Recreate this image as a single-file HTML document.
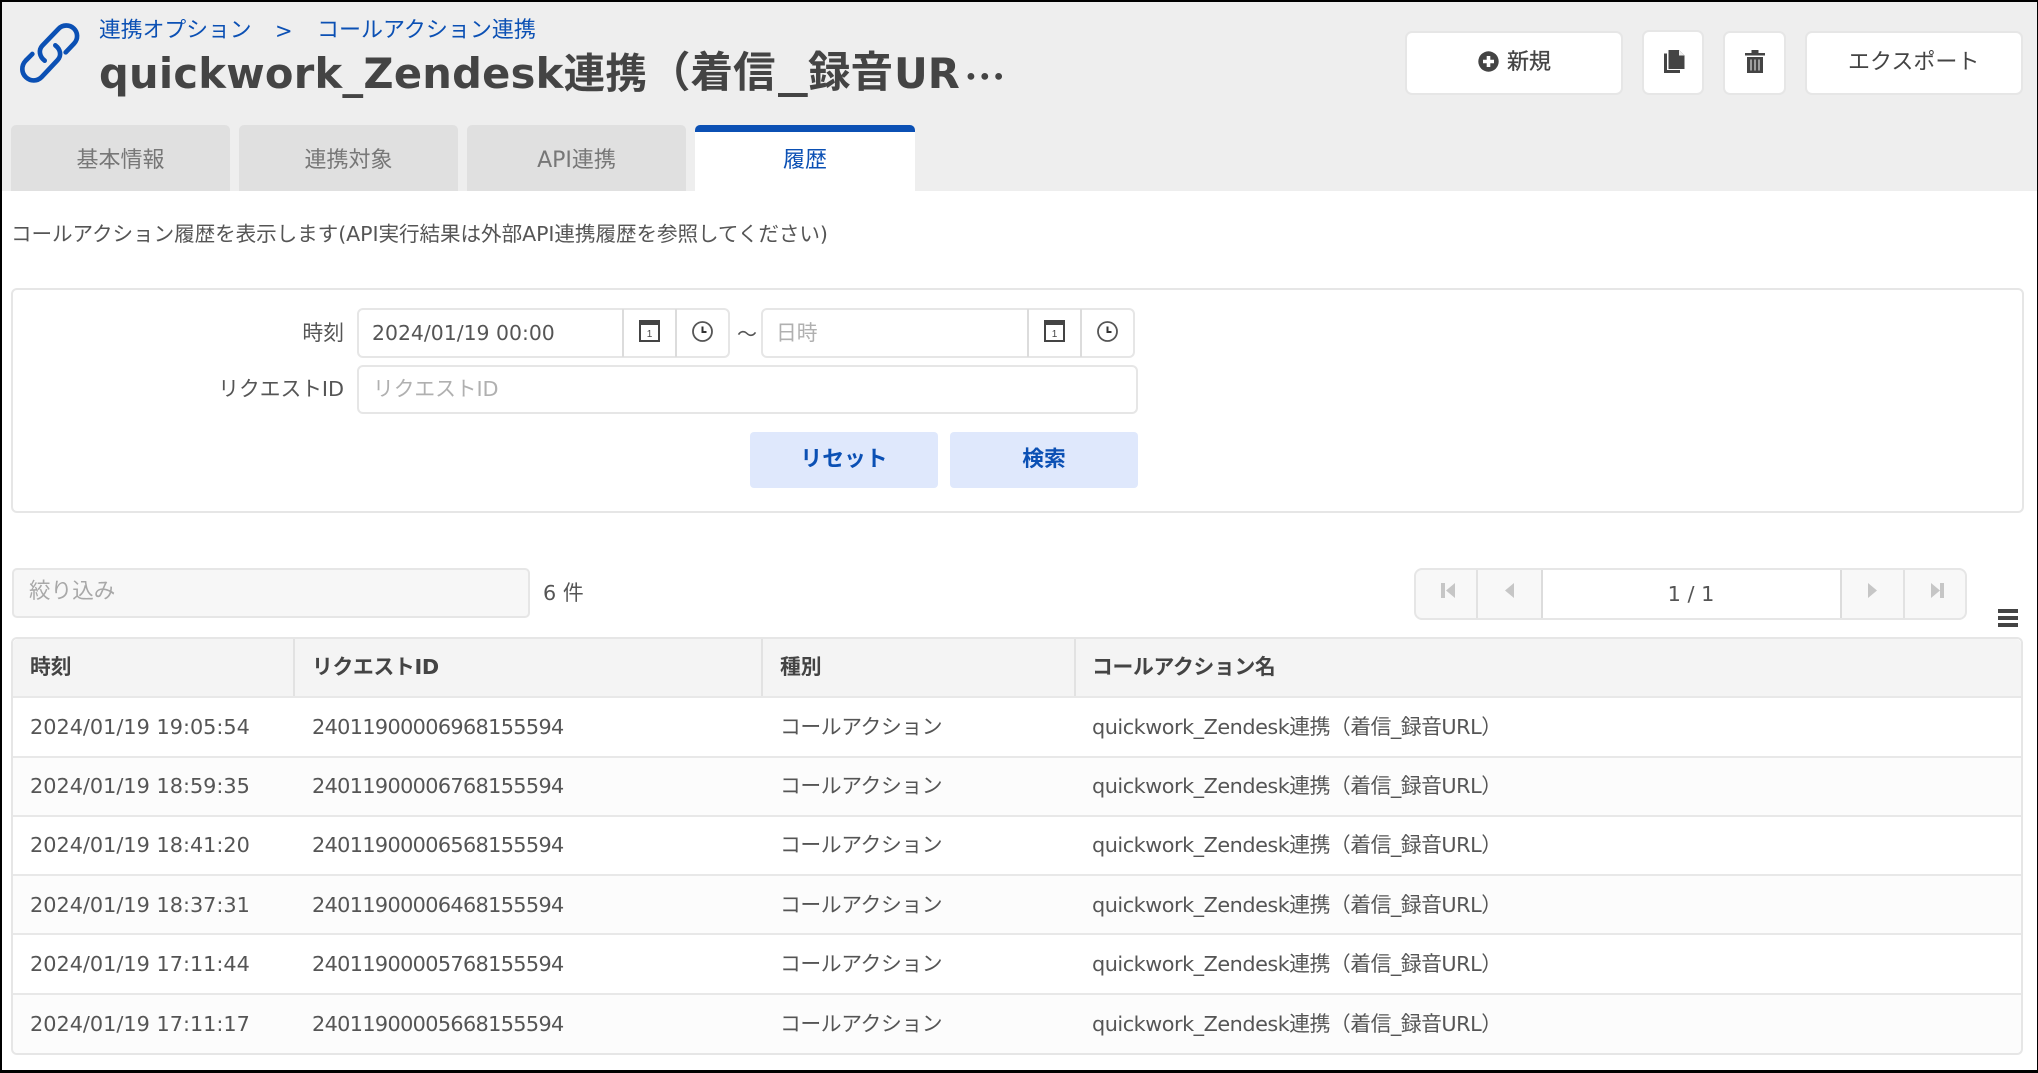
<!DOCTYPE html>
<html lang="ja"><head><meta charset="utf-8"><title>履歴</title>
<style>
*{box-sizing:border-box}
html,body{margin:0;padding:0;background:#fff}
body{width:2038px;height:1073px;position:relative;overflow:hidden;font-family:"DejaVu Sans","Noto Sans CJK JP",sans-serif;color:#555;font-size:20.8px}
#w{position:absolute;left:0;top:0;width:2038px;height:1073px;filter:blur(.35px)}
.a{position:absolute}
.t{position:absolute;height:30px;line-height:30px;white-space:nowrap}
.h{position:absolute;top:49px;height:50px;line-height:50px;white-space:nowrap;font-size:42.5px;font-weight:bold;color:#444}
.box{position:absolute;background:#fff;border:2px solid #e6e6e6;border-radius:6px}
.tab{position:absolute;top:125px;width:219px;height:66px;background:#e0e0e0;border-radius:5px 5px 0 0;text-align:center;line-height:72px;font-size:22px;color:#777}
.btn{position:absolute;top:31px;height:64px;background:#fff;border:2px solid #e6e6e6;border-radius:7px}
.blue{position:absolute;top:432px;width:188px;height:56px;background:#dfe8fc;border-radius:4px;text-align:center;line-height:55px;color:#0b50b4;font-weight:bold;font-size:21.8px}
.v{position:absolute;width:2px;background:#dcdcdc}
.r{position:absolute;left:13px;width:2008px;height:60px;border-top:2px solid #e8e8e8}
.ph{color:#b0b0b0}
.c1{left:30px;letter-spacing:0}
.c2{left:312px;letter-spacing:-.65px}
.c3{left:780px;letter-spacing:-.4px}
.c4{left:1092px;letter-spacing:-.48px}
</style></head><body><div id="w">
<!-- header -->
<div class="a" style="left:0;top:0;width:2038px;height:191px;background:#eeeeee"></div>
<svg class="a" style="left:0;top:0" width="120" height="100" viewBox="0 0 360 300"><g fill="none" stroke="#0b50b4" stroke-width="14" stroke-linecap="round"><path d="M197 157 L222 131 C235 117 234 97 221 85 C208 73 188 74 176 86 L127 137 C115 150 118 170 134 182"/><path d="M97 162 L77 182 C63 197 64 219 78 232 C92 245 112 244 124 232 L173 180 C185 167 182 148 166 136"/></g></svg>
<div class="t" style="left:99px;top:16px;color:#0b50b4;font-size:21.8px">連携オプション</div>
<div class="t" style="left:275px;top:16px;color:#0b50b4;font-size:21px">&gt;</div>
<div class="t" style="left:317px;top:16px;color:#0b50b4;font-size:22px">コールアクション連携</div>
<div class="h" style="left:99px;font-size:41.6px;letter-spacing:.25px">quickwork_Zendesk連携</div>
<div class="h" style="left:648px">（着信</div>
<div class="h" style="left:778px;transform:scaleX(1.4);transform-origin:left center">_</div>
<div class="h" style="left:810px;margin-left:-2px">録音</div>
<div class="h" style="left:894px;font-size:41.6px">UR</div>
<div class="h" style="left:964px;font-size:41.6px;font-family:'Noto Sans CJK JP',sans-serif">…</div>

<div class="btn" style="left:1405px;width:218px"></div>
<svg class="a" style="left:1478px;top:51px" width="21" height="21" viewBox="0 0 21 21"><circle cx="10.5" cy="10.5" r="10.2" fill="#444"/><path d="M10.5 5v11M5 10.500h11" stroke="#fff" stroke-width="3.600"/></svg>
<div class="t" style="left:1507px;top:48px;font-size:22px;color:#444;-webkit-text-stroke:.3px #444">新規</div>
<div class="btn" style="left:1642px;width:62px;top:30px;height:65px"></div>
<svg class="a" style="left:1664px;top:50px" width="21" height="23" viewBox="0 0 21 23"><path d="M4.500 0h10.500l5.500 5.500v13.500H4.500z" fill="#444"/><path d="M15 0v5.500h5.500z" fill="#eee"/><path d="M0 3.500h3v16.500h13v3H0z" fill="#444"/></svg>
<div class="btn" style="left:1723px;width:63px"></div>
<svg class="a" style="left:1745px;top:50px" width="20" height="23" viewBox="0 0 20 23"><path d="M0 3h20v2.500H0zM6.500 0h7v3h-7z" fill="#444"/><path d="M2 7h16v16H2z" fill="#444"/><path d="M6 9.500v11M10 9.500v11M14 9.500v11" stroke="#bbb" stroke-width="1.500"/></svg>
<div class="btn" style="left:1805px;width:218px"></div>
<div class="t" style="left:1848px;top:48px;font-size:22px;color:#444">エクスポート</div>

<div class="tab" style="left:11px">基本情報</div>
<div class="tab" style="left:239px">連携対象</div>
<div class="tab" style="left:467px">API連携</div>
<div class="tab" style="left:695px;width:220px;background:#fff;color:#0b50b4;border-top:7px solid #0b50b4;line-height:58px">履歴</div>

<div class="t" style="left:11px;top:219px;font-size:20.6px;letter-spacing:-.08px">コールアクション履歴を表示します(API実行結果は外部API連携履歴を参照してください)</div>

<!-- search panel -->
<div class="box" style="left:11px;top:288px;width:2013px;height:225px"></div>
<div class="t" style="right:1694px;top:318px">時刻</div>
<div class="box" style="left:357px;top:308px;width:373px;height:50px"></div>
<div class="v" style="left:622px;top:309px;height:48px"></div>
<div class="v" style="left:675px;top:309px;height:48px"></div>
<div class="t" style="left:372px;top:318px;font-size:20.4px">2024/01/19 00:00</div>
<svg class="a" style="left:639px;top:320px" width="21" height="22" viewBox="0 0 21 22"><rect x="1" y="1" width="19" height="20" fill="none" stroke="#444" stroke-width="2"/><rect x="0" y="0" width="21" height="5" fill="#444"/><text x="10.500" y="17" font-size="10" text-anchor="middle" fill="#444" font-family="Liberation Sans, sans-serif">1</text></svg>
<svg class="a" style="left:692px;top:321px" width="21" height="21" viewBox="0 0 21 21"><circle cx="10.500" cy="10.500" r="9.500" fill="none" stroke="#555" stroke-width="1.800"/><path d="M10.500 5.500v5.500h4" fill="none" stroke="#333" stroke-width="2"/></svg>
<div class="t" style="left:737px;top:318px;font-size:20px;font-family:'Noto Sans CJK JP',sans-serif">〜</div>
<div class="box" style="left:761px;top:308px;width:374px;height:50px"></div>
<div class="v" style="left:1027px;top:309px;height:48px"></div>
<div class="v" style="left:1080px;top:309px;height:48px"></div>
<div class="t ph" style="left:776px;top:318px">日時</div>
<svg class="a" style="left:1044px;top:320px" width="21" height="22" viewBox="0 0 21 22"><rect x="1" y="1" width="19" height="20" fill="none" stroke="#444" stroke-width="2"/><rect x="0" y="0" width="21" height="5" fill="#444"/><text x="10.500" y="17" font-size="10" text-anchor="middle" fill="#444" font-family="Liberation Sans, sans-serif">1</text></svg>
<svg class="a" style="left:1097px;top:321px" width="21" height="21" viewBox="0 0 21 21"><circle cx="10.500" cy="10.500" r="9.500" fill="none" stroke="#555" stroke-width="1.800"/><path d="M10.500 5.500v5.500h4" fill="none" stroke="#333" stroke-width="2"/></svg>
<div class="t" style="right:1694px;top:374px;letter-spacing:-.05px">リクエストID</div>
<div class="box" style="left:357px;top:365px;width:781px;height:49px"></div>
<div class="t ph" style="left:373px;top:374px;letter-spacing:-.1px">リクエストID</div>
<div class="blue" style="left:750px">リセット</div>
<div class="blue" style="left:950px">検索</div>

<!-- list tools -->
<div class="box" style="left:12px;top:568px;width:518px;height:50px;background:#f7f7f7;border-radius:5px"></div>
<div class="t ph" style="left:29px;top:577px;color:#a8a8a8;font-size:21.6px">絞り込み</div>
<div class="t" style="left:543px;top:578px">6 件</div>
<div class="box" style="left:1414px;top:568px;width:553px;height:52px;background:#f8f8f8;border-radius:8px"></div>
<div class="a" style="left:1542px;top:570px;width:298px;height:48px;background:#fff"></div>
<div class="v" style="left:1476px;top:570px;height:48px;background:#e2e2e2"></div>
<div class="v" style="left:1541px;top:570px;height:48px"></div>
<div class="v" style="left:1840px;top:570px;height:48px"></div>
<div class="v" style="left:1903px;top:570px;height:48px;background:#e2e2e2"></div>
<svg class="a" style="left:1440px;top:582px" width="506" height="18" viewBox="0 0 506 18" fill="#c6c6c6"><path d="M1 1h4v15H1zM15 1v15L6 8.500zM74 1v15L65 8.500zM428 1v15l9-7.500zM491 1v15l9-7.500zM500 1h4v15h-4z"/></svg>
<div class="t" style="left:1639px;width:104px;text-align:center;top:579px">1 / 1</div>
<div class="a" style="left:1998px;top:609px;width:20px;height:3.500px;background:#444"></div>
<div class="a" style="left:1998px;top:616px;width:20px;height:3.500px;background:#444"></div>
<div class="a" style="left:1998px;top:623px;width:20px;height:3.500px;background:#444"></div>

<!-- table -->
<div class="box" style="left:11px;top:637px;width:2012px;height:418px;overflow:hidden"></div>
<div class="a" style="left:13px;top:639px;width:2008px;height:58px;background:#f4f4f4;border-radius:5px 5px 0 0"></div>
<div class="v" style="left:293px;top:639px;height:58px;background:#e2e2e2"></div>
<div class="v" style="left:761px;top:639px;height:58px;background:#e2e2e2"></div>
<div class="v" style="left:1074px;top:639px;height:58px;background:#e2e2e2"></div>
<div class="t" style="left:30px;top:652px;font-weight:bold;letter-spacing:-.1px;color:#444">時刻</div>
<div class="t" style="left:312px;top:652px;font-weight:bold;letter-spacing:-.3px;color:#444">リクエストID</div>
<div class="t" style="left:780px;top:652px;font-weight:bold;letter-spacing:-.1px;color:#444">種別</div>
<div class="t" style="left:1092px;top:652px;font-weight:bold;letter-spacing:-.3px;color:#444">コールアクション名</div>

<div class="r" style="top:696px"></div>
<div class="t c1" style="top:712px">2024/01/19 19:05:54</div><div class="t c2" style="top:712px">24011900006968155594</div><div class="t c3" style="top:712px">コールアクション</div><div class="t c4" style="top:712px">quickwork_Zendesk連携（着信_録音URL）</div>
<div class="r" style="top:756px;background:#fcfcfc"></div>
<div class="t c1" style="top:771px">2024/01/19 18:59:35</div><div class="t c2" style="top:771px">24011900006768155594</div><div class="t c3" style="top:771px">コールアクション</div><div class="t c4" style="top:771px">quickwork_Zendesk連携（着信_録音URL）</div>
<div class="r" style="top:815px"></div>
<div class="t c1" style="top:830px">2024/01/19 18:41:20</div><div class="t c2" style="top:830px">24011900006568155594</div><div class="t c3" style="top:830px">コールアクション</div><div class="t c4" style="top:830px">quickwork_Zendesk連携（着信_録音URL）</div>
<div class="r" style="top:874px;background:#fcfcfc"></div>
<div class="t c1" style="top:890px">2024/01/19 18:37:31</div><div class="t c2" style="top:890px">24011900006468155594</div><div class="t c3" style="top:890px">コールアクション</div><div class="t c4" style="top:890px">quickwork_Zendesk連携（着信_録音URL）</div>
<div class="r" style="top:933px"></div>
<div class="t c1" style="top:949px">2024/01/19 17:11:44</div><div class="t c2" style="top:949px">24011900005768155594</div><div class="t c3" style="top:949px">コールアクション</div><div class="t c4" style="top:949px">quickwork_Zendesk連携（着信_録音URL）</div>
<div class="r" style="top:993px;height:60px;background:#fcfcfc;border-radius:0 0 5px 5px"></div>
<div class="t c1" style="top:1009px">2024/01/19 17:11:17</div><div class="t c2" style="top:1009px">24011900005668155594</div><div class="t c3" style="top:1009px">コールアクション</div><div class="t c4" style="top:1009px">quickwork_Zendesk連携（着信_録音URL）</div>
</div>
<!-- frame -->
<div class="a" style="left:0;top:0;width:2038px;height:1073px;border-style:solid;border-color:#000;border-width:2px 1px 3px 2px;pointer-events:none"></div>
</body></html>
